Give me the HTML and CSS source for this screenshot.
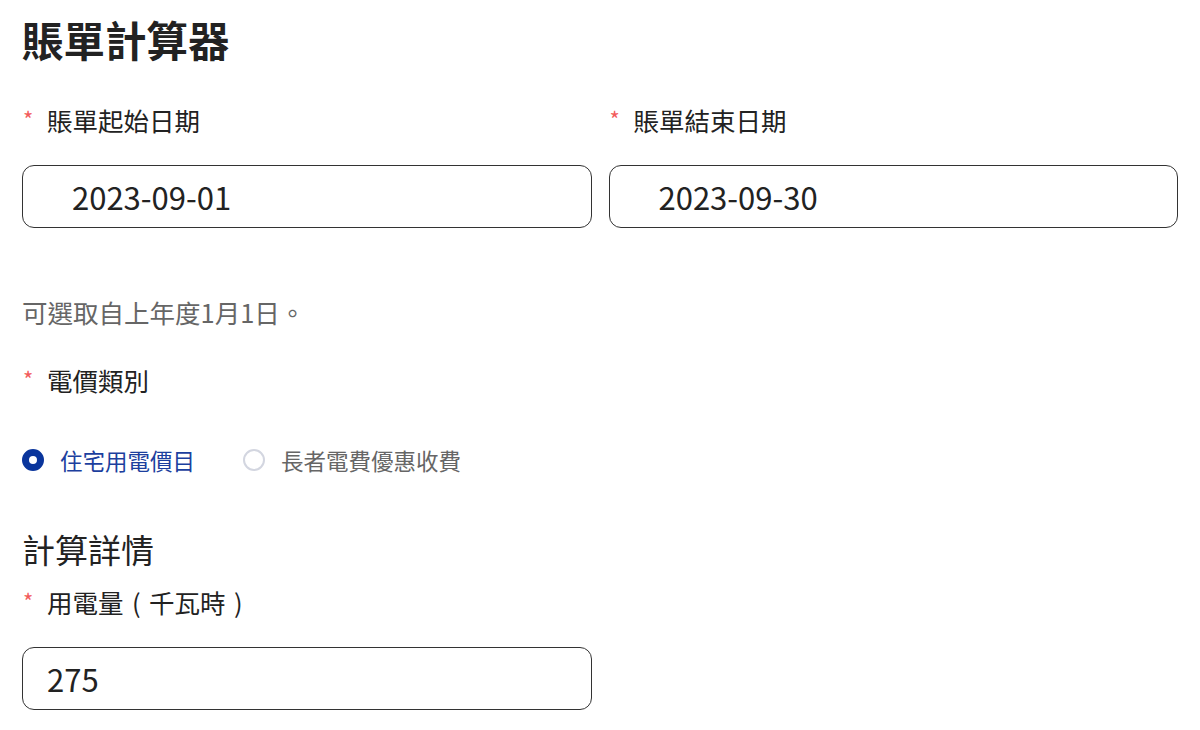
FILE: index.html
```html
<!DOCTYPE html>
<html lang="zh-Hant">
<head>
<meta charset="utf-8">
<title>賬單計算器</title>
<link rel="stylesheet" href="styles.css">
</head>
<body>
<main class="page">
  <h1 class="title">賬單計算器</h1>

  <div class="date-row">
    <div class="field">
      <label class="label"><span class="req">*</span>賬單起始日期</label>
      <div class="input input-date">2023-09-01</div>
    </div>
    <div class="field">
      <label class="label"><span class="req">*</span>賬單結束日期</label>
      <div class="input input-date">2023-09-30</div>
    </div>
  </div>

  <p class="hint">可選取自上年度1月1日。</p>

  <label class="label label-type"><span class="req">*</span>電價類別</label>

  <div class="radios">
    <div class="radio checked"><span class="dot"></span><span class="radio-text">住宅用電價目</span></div>
    <div class="radio"><span class="dot"></span><span class="radio-text">長者電費優惠收費</span></div>
  </div>

  <h2 class="section">計算詳情</h2>

  <label class="label label-usage"><span class="req">*</span>用電量<span class="paren">(</span>千瓦時<span class="paren">)</span></label>
  <div class="half">
    <div class="input input-num">275</div>
  </div>
</main>
</body>
</html>
```

FILE: styles.css
```css
* { box-sizing: border-box; }
html, body { margin: 0; padding: 0; background: #fff; }
body {
  font-family: "Noto Sans CJK TC", "Noto Sans", sans-serif;
  color: #222;
}
.page {
  padding: 15px 22px 0 22px;
  display: flex;
  flex-direction: column;
}
.title {
  margin: 0;
  font-size: 41.5px;
  font-weight: 700;
  line-height: 48px;
  color: #222;
}
.date-row {
  margin-top: 39px;
  display: grid;
  grid-template-columns: 1fr 1fr;
  gap: 17px;
}
.field { display: flex; flex-direction: column; }
.label {
  display: flex;
  align-items: center;
  font-size: 25.5px;
  line-height: 36px;
  color: #222;
}
.paren {
  display: inline-block;
  width: 25.5px;
  text-align: center;
}
.req {
  color: #f25c5c;
  width: 25px;
  font-size: 22px;
  padding-left: 1px;
  position: relative;
  top: -2px;
}
.input {
  margin-top: 27px;
  height: 63px;
  border: 1.8px solid #333;
  border-radius: 12px;
  display: flex;
  align-items: center;
  font-size: 31px;
  color: #222;
}
.input-date { padding-left: 49px; }
.input-num { padding-left: 24px; }
.hint {
  margin: 67px 0 0 0;
  font-size: 25.5px;
  line-height: 34px;
  color: #666;
}
.label-type { margin-top: 33px; }
.radios {
  margin-top: 46px;
  display: flex;
  gap: 48px;
  height: 32px;
  align-items: center;
}
.radio {
  display: flex;
  align-items: center;
  gap: 16px;
  font-size: 22.5px;
  color: #666;
}
.dot {
  width: 22px;
  height: 22px;
  border-radius: 50%;
  border: 2px solid #d3d6e0;
  background: #fff;
  display: block;
}
.radio.checked { color: #1c3f9e; }
.radio.checked .dot {
  border: 7.5px solid #0a359c;
  background: #fff;
}
.section {
  margin: 51px 0 0 0;
  font-size: 33px;
  font-weight: 400;
  line-height: 44px;
  color: #222;
}
.label-usage { margin-top: 13px; }
.half {
  display: grid;
  grid-template-columns: 1fr 1fr;
  gap: 17px;
}
.half .input { margin-top: 27px; }
```
